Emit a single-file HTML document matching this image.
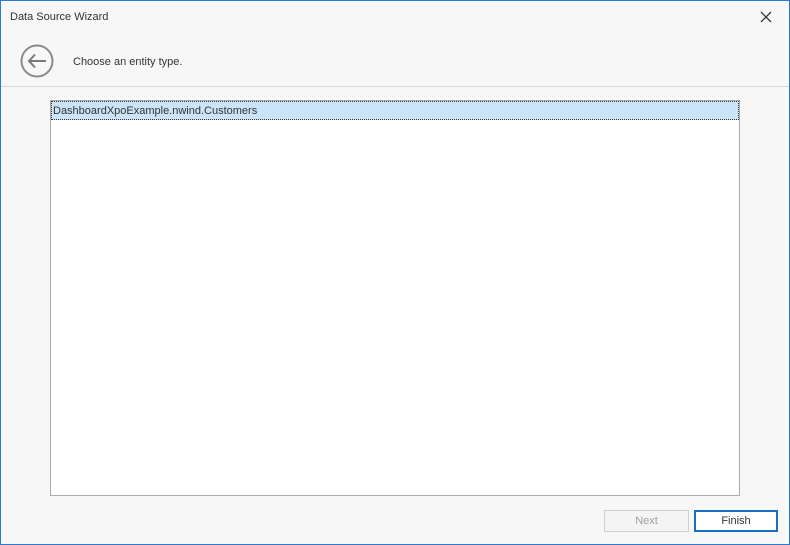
<html><head><style>
body{margin:0;width:790px;height:545px;overflow:hidden;font-family:"Liberation Sans",sans-serif;font-size:11px;color:#333}
.win{position:absolute;left:0;top:0;width:788px;height:543px;border:1px solid #2b79d0;background:#f7f7f7}
.a{position:absolute}
</style></head><body><div class="win">
<div class="a" style="left:9px;top:10px;font-size:11px">Data Source Wizard</div>
<svg class="a" style="left:758px;top:9px" width="14" height="14"><path d="M2 2L12 12M12 2L2 12" stroke="#333" stroke-width="1.3"/></svg>
<svg class="a" style="left:19px;top:43px" width="36" height="36"><circle cx="17" cy="17" r="15.5" fill="none" stroke="#8a8a8a" stroke-width="2"/><path d="M9 17H26M15 10.5L9 17L15 23.5" fill="none" stroke="#7a7a7a" stroke-width="2"/></svg>
<div class="a" style="left:72px;top:55px">Choose an entity type.</div>
<div class="a" style="left:0;top:85px;width:788px;height:1px;background:#d6d6d6"></div>
<div class="a" style="left:49px;top:99px;width:688px;height:394px;border:1px solid #ababab;background:#fff"></div>
<div class="a" style="left:50px;top:100px;width:688px;height:19px;background:#cce4f7;border:1px dotted #333;box-sizing:border-box;padding-left:1px;line-height:19px;color:#333">DashboardXpoExample.nwind.Customers</div>
<div class="a" style="left:603px;top:509px;width:83px;height:20px;border:1px solid #cfcfcf;background:#f4f4f4;color:#a0a0a0;text-align:center;line-height:21px">Next</div>
<div class="a" style="left:693px;top:509px;width:80px;height:18px;border:2px solid #1a6fc4;background:#fff;text-align:center;line-height:19px">Finish</div>
</div></body></html>
